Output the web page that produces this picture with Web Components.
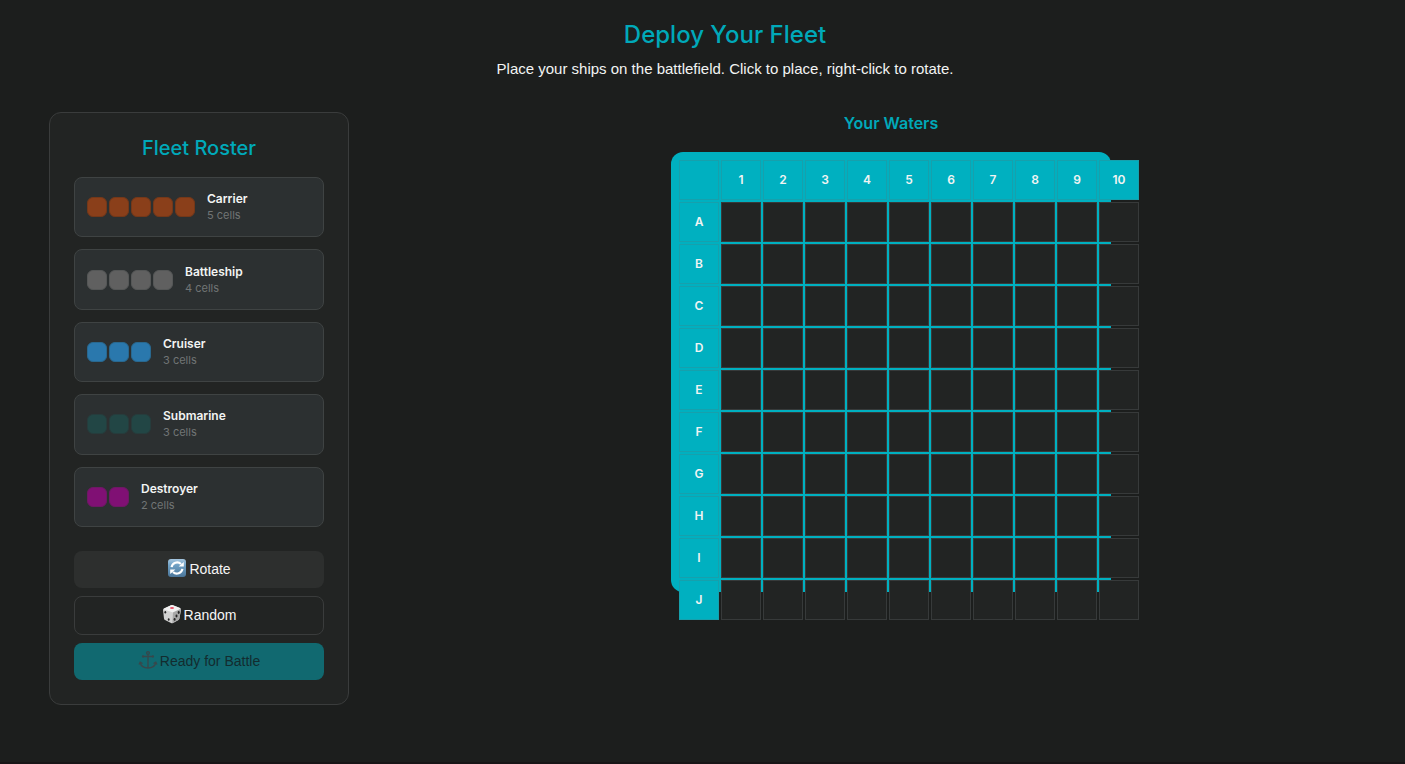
<!DOCTYPE html>
<html lang="en">
<head>
<meta charset="utf-8">
<meta name="viewport" content="width=device-width, initial-scale=1">
<title>Deploy Your Fleet</title>
<style>
  html { background: #1c1e1d; }
  body {
    margin: 0;
    color: #f2f4f3;
    font: 14px/20px "Inter", "Liberation Sans", sans-serif;
    --teal: #00b0c0;
    --teal-text: #00a9b9;
    --panel: #222423;
    --card: #2c3031;
    --line: #3a3c3c;
    --muted: #717575;
  }
</style>
</head>
<body>
<fleet-setup></fleet-setup>

<script>
  class ShadowElement extends HTMLElement {
    connectedCallback() {
      if (this.shadowRoot) return;
      this.attachShadow({ mode: "open" }).innerHTML = this.render();
    }
  }

  class FleetSetup extends ShadowElement {
    render() {
      return `
      <style>
        :host { display: block; box-sizing: border-box; min-height: 100vh; padding: 20px 4px 20px 49px; border-bottom: 2px solid #181517; }
        header { text-align: center; margin-bottom: 31px; }
        h1 { margin: 0 0 7px; font-size: 24px; line-height: 30px; font-weight: 500; color: var(--teal-text); }
        p { margin: 0; font: 15px/24px "Liberation Sans", Arial, sans-serif; }
        main { display: grid; grid-template-columns: 300px 1fr; gap: 32px; align-items: start; }
      </style>
      <header>
        <h1>Deploy Your Fleet</h1>
        <p>Place your ships on the battlefield. Click to place, right-click to rotate.</p>
      </header>
      <main>
        <fleet-roster>
          <ship-card size="5" color="#8a3f1a" edge="#743819">Carrier</ship-card>
          <ship-card size="4" color="#606060" edge="#555757">Battleship</ship-card>
          <ship-card size="3" color="#2a78ad" edge="#29688f">Cruiser</ship-card>
          <ship-card size="3" color="#224645" edge="#263c3c">Submarine</ship-card>
          <ship-card size="2" color="#801074" edge="#6d1964">Destroyer</ship-card>
        </fleet-roster>
        <battle-grid>Your Waters</battle-grid>
      </main>`;
    }
  }

  class FleetRoster extends ShadowElement {
    render() {
      return `
      <style>
        :host { display: block; box-sizing: border-box; padding: 24px; background: var(--panel); border: 1px solid var(--line); border-radius: 12px; }
        h2 { margin: 0 0 18px; font-size: 20px; line-height: 22px; font-weight: 500; text-align: center; color: var(--teal-text); }
        .ships { display: grid; grid-auto-rows: 1fr; gap: 12px; min-height: 350px; margin-bottom: 24px; }
        .actions { display: grid; gap: 8px; }
      </style>
      <h2>Fleet Roster</h2>
      <div class="ships"><slot></slot></div>
      <div class="actions">
        <action-button kind="secondary">
          <svg slot="icon" width="20" height="20" viewBox="0 0 20 20" aria-hidden="true">
            <defs><linearGradient id="sky" x2="0" y2="1"><stop stop-color="#a5c6df"/><stop offset=".35" stop-color="#6fa0c4"/><stop offset="1" stop-color="#4a7599"/></linearGradient></defs>
            <rect x="1" y="1" width="18" height="18" rx="3" fill="url(#sky)"/>
            <path d="M4.6 9.2A5.6 5.6 0 0 1 14 6M15.4 10.8A5.6 5.6 0 0 1 6 14" fill="none" stroke="#fff" stroke-width="2.2"/>
            <path d="M11.6 8.6h5.2V4zM8.4 11.4H3.2V16z" fill="#fff"/>
          </svg>Rotate</action-button>
        <action-button kind="outline">
          <svg slot="icon" width="20" height="20" viewBox="0 0 20 20" aria-hidden="true">
            <path d="M2 4.5 9 1.2q1-.4 2 0l7 2.8q1 .5 1 1.5l-1.6 9q-.2 1-1 1.400l-5.400 3q-1 .5-2 0l-6-3q-.9-.5-1-1.500L1 6q0-1 1-1.500z" fill="#d2d2d2"/>
            <path d="M2 4.500 9 1.200q1-.4 2 0l7 2.800q.8.500 0 1L11.500 8q-1 .5-2 .1L2 5.500q-.8-.5 0-1z" fill="#f1f1f1"/>
            <path d="M11 8.500 18.500 5q.6 0 .5 1l-1.600 8.500q-.2 1-1 1.400l-5.400 3q-.6.300-.6-.5z" fill="#a8a8a8"/>
            <ellipse cx="10" cy="4" rx="2" ry="1.100" fill="#e8526a"/>
            <g fill="#252525"><ellipse cx="3.300" cy="8.300" rx=".9" ry="1.300"/><ellipse cx="6.700" cy="15.500" rx=".9" ry="1.300"/><ellipse cx="16.700" cy="8.500" rx="1" ry="1.400"/><ellipse cx="14.500" cy="12" rx="1" ry="1.400"/><ellipse cx="12.600" cy="15.400" rx="1" ry="1.400"/></g>
          </svg>Random</action-button>
        <action-button kind="primary" disabled>
          <svg slot="icon" width="20" height="20" viewBox="0 0 20 20" fill="none" stroke="#38474b" stroke-width="1.3" aria-hidden="true">
            <circle cx="10" cy="3" r="1.4"/><path d="M10 4.400V18M5 6.500h10M2.200 13c1 3.500 4 4.800 7.800 5 3.800-.2 6.800-1.500 7.800-5M1 14.500l1.200-2.300 2.300 1.300M19 14.500l-1.200-2.300-2.300 1.300"/><circle cx="5" cy="6.500" r=".5"/><circle cx="15" cy="6.500" r=".5"/>
          </svg>Ready for Battle</action-button>
      </div>`;
    }
  }

  class ShipCard extends ShadowElement {
    render() {
      const size = Number(this.getAttribute("size"));
      return `
      <style>
        :host { display: flex; align-items: center; gap: 12px; box-sizing: border-box; padding: 0 12px; background: var(--card); border: 1px solid #3f4343; border-radius: 8px; }
        .hull { display: flex; gap: 2px; }
        .hull i { box-sizing: border-box; width: 20px; height: 20px; border-radius: 6px; background: ${this.getAttribute("color")}; border: 1px solid ${this.getAttribute("edge")}; }
        .name { font-size: 12px; line-height: 16px; font-weight: 600; }
        .size { font-size: 11px; line-height: 16px; color: var(--muted); }
      </style>
      <div class="hull" aria-hidden="true">${"<i></i>".repeat(size)}</div>
      <div>
        <div class="name"><slot></slot></div>
        <div class="size">${size} cells</div>
      </div>`;
    }
  }

  class ActionButton extends ShadowElement {
    render() {
      return `
      <style>
        :host { display: block; }
        button { display: flex; align-items: center; justify-content: center; gap: 2px; box-sizing: border-box; width: 100%; height: 37px; padding: 0 16px 2px; border: 0; border-radius: 8px; font: 14px/20px "Liberation Sans", Arial, sans-serif; color: #f5f5f5; background: #2d2f2e; cursor: pointer; }
        :host([kind="outline"]) button { height: 39px; background: transparent; border: 1px solid var(--line); }
        :host([kind="primary"]) button { background: #116970; color: #132c2f; cursor: not-allowed; }
        ::slotted(svg) { display: block; margin-bottom: 2px; }
      </style>
      <button type="button"${this.hasAttribute("disabled") ? " disabled" : ""}><slot name="icon"></slot><span><slot></slot></span></button>`;
    }
  }

  class BattleGrid extends ShadowElement {
    render() {
      const columns = Array.from({ length: 10 }, (_, i) => i + 1);
      const head = columns.map(n => `<th scope="col">${n}</th>`).join("");
      const rows = [..."ABCDEFGHIJ"].map(letter =>
        `<tr><th scope="row">${letter}</th>${"<td></td>".repeat(10)}</tr>`).join("");
      return `
      <style>
        :host { display: flex; flex-direction: column; align-items: center; gap: 18px; }
        h3 { margin: 0; font-size: 16px; line-height: 22px; font-weight: 600; color: var(--teal-text); }
        .board { box-sizing: border-box; width: 440px; height: 440px; padding: 6px; border-radius: 12px; background: var(--teal); }
        table { width: 464px; table-layout: fixed; border-collapse: separate; border-spacing: 2px; }
        th, td { box-sizing: border-box; width: 40px; height: 40px; padding: 0; border: 1px solid #373a3a; background: var(--panel); }
        th, thead td { border-color: #17a0ac; background: var(--teal); font-size: 12px; line-height: 18px; font-weight: 600; text-align: center; vertical-align: middle; }
      </style>
      <h3><slot></slot></h3>
      <div class="board">
        <table aria-label="Your Waters">
          <thead><tr><td></td>${head}</tr></thead>
          <tbody>${rows}</tbody>
        </table>
      </div>`;
    }
  }

  customElements.define("action-button", ActionButton);
  customElements.define("ship-card", ShipCard);
  customElements.define("fleet-roster", FleetRoster);
  customElements.define("battle-grid", BattleGrid);
  customElements.define("fleet-setup", FleetSetup);
</script>
</body>
</html>
